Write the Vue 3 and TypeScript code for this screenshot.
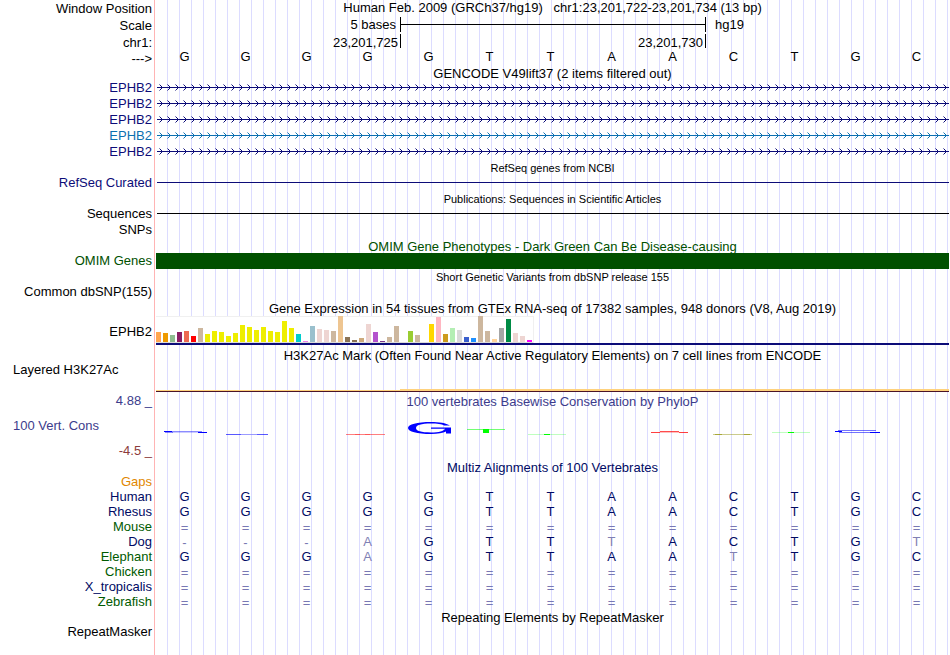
<script setup lang="ts">
interface GeneRow { id: number; tone: string }
interface Species { name: string; tone: string; bases: string; faded: number[] }
interface TissueBar { x: number; height: number; color: string }

const sequence: string[] = 'GGGGGTTAACTGC'.split('')

const genes: GeneRow[] = [
  { id: 1, tone: 'navy' },
  { id: 2, tone: 'navy' },
  { id: 3, tone: 'navy' },
  { id: 4, tone: 'blue' },
  { id: 5, tone: 'navy' },
]

const species: Species[] = [
  { name: 'Human', tone: 'deep', bases: 'GGGGGTTAACTGC', faded: [] },
  { name: 'Rhesus', tone: 'deep', bases: 'GGGGGTTAACTGC', faded: [] },
  { name: 'Mouse', tone: 'green', bases: '=============', faded: [] },
  { name: 'Dog', tone: 'deep', bases: '---AGTTTACTGT', faded: [3, 7, 12] },
  { name: 'Elephant', tone: 'green', bases: 'GGGAGTTAATTGC', faded: [3, 9] },
  { name: 'Chicken', tone: 'green', bases: '=============', faded: [] },
  { name: 'X_tropicalis', tone: 'deep', bases: '=============', faded: [] },
  { name: 'Zebrafish', tone: 'green', bases: '=============', faded: [] },
]

const baseClass = (row: Species, base: string, index: number): string => {
  if (base === '=' || base === '-') return 'gap'
  return row.faded.includes(index) ? 'faded' : 'deep'
}

const tissues: [number, string][] = [
  [10, '#ffa54f'], [9, '#ee9a00'], [7, '#8fbc8f'], [10, '#8b1c62'], [11, '#ee6a50'], [6, '#ff0000'],
  [14, '#cdb79e'], [8, '#eeee00'], [11, '#eeee00'], [10, '#eeee00'], [6, '#eeee00'], [9, '#eeee00'],
  [17, '#eeee00'], [15, '#eeee00'], [12, '#eeee00'], [15, '#eeee00'], [11, '#eeee00'], [10, '#eeee00'],
  [21, '#eeee00'], [14, '#eeee00'], [8, '#00cdcd'], [1, '#ee82ee'], [16, '#9ac0cd'], [13, '#eed5d2'],
  [12, '#eed5d2'], [11, '#cdb79e'], [26, '#eec591'], [5, '#8b7355'], [2, '#8b7355'], [4, '#cdaa7d'],
  [18, '#eed5d2'], [10, '#b452cd'], [1, '#7a378b'], [5, '#cdb79e'], [16, '#cdb79e'], [0, '#cdb79e'],
  [11, '#9acd32'], [7, '#cdb79e'], [0, '#7a67ee'], [18, '#ffd700'], [25, '#ffb6c1'], [8, '#cd9b1d'],
  [14, '#b4eeb4'], [12, '#d9d9d9'], [5, '#3a5fcd'], [4, '#1e90ff'], [26, '#cdb79e'], [11, '#cdb79e'],
  [3, '#ffd39b'], [14, '#a6a6a6'], [23, '#008b45'], [9, '#eed5d2'], [6, '#eed5d2'], [2, '#ff00ff'],
]
const bars: TissueBar[] = tissues.map(([height, color], i) => ({ x: i * 7, height, color }))
</script>

<template>
  <main class="browser">
    <section class="row position">
      <div class="label">Window Position</div>
      <h1 class="title">Human Feb. 2009 (GRCh37/hg19) &nbsp; chr1:23,201,722-23,201,734 (13 bp)</h1>
    </section>
    <section class="row scale">
      <div class="label">Scale</div>
      <div class="ruler">
        <span class="before">5 bases</span>
        <span class="span"></span>
        <span class="after">hg19</span>
      </div>
    </section>
    <section class="row coords">
      <div class="label">chr1:</div>
      <div class="ruler">
        <span class="tick">23,201,725</span>
        <span class="tick">23,201,730</span>
      </div>
    </section>
    <section class="row strand">
      <div class="label">---&gt;</div>
      <div class="bases">
        <span v-for="(base, i) in sequence" :key="i">{{ base }}</span>
      </div>
    </section>

    <h2 class="title track gencode">GENCODE V49lift37 (2 items filtered out)</h2>
    <section v-for="gene in genes" :key="gene.id" class="row gene" :class="gene.tone">
      <div class="label">EPHB2</div>
      <svg class="intron" width="100%" height="16" aria-hidden="true">
        <defs>
          <pattern :id="`arrows-${gene.id}`" x="1" width="8" height="16" patternUnits="userSpaceOnUse">
            <path d="M2 4h1v1h-1zM2 10h1v1h-1z" fill="currentColor" opacity=".5" />
            <path d="M3 5h1v1h-1zM4 6h1v1h-1zM4 8h1v1h-1zM3 9h1v1h-1z" fill="currentColor" />
          </pattern>
        </defs>
        <rect x="1" y="7" width="100%" height="1" fill="currentColor" />
        <rect x="1" width="100%" height="16" :fill="`url(#arrows-${gene.id})`" />
      </svg>
    </section>

    <h2 class="title track small">RefSeq genes from NCBI</h2>
    <section class="row refseq navy">
      <div class="label">RefSeq Curated</div>
      <div class="line"></div>
    </section>

    <h2 class="title track small">Publications: Sequences in Scientific Articles</h2>
    <section class="row sequences">
      <div class="label">Sequences</div>
      <div class="line"></div>
    </section>
    <section class="row snps">
      <div class="label">SNPs</div>
    </section>

    <h2 class="title track omim-title">OMIM Gene Phenotypes - Dark Green Can Be Disease-causing</h2>
    <section class="row omim">
      <div class="label">OMIM Genes</div>
      <div class="block"></div>
    </section>

    <h2 class="title track small dbsnp-title">Short Genetic Variants from dbSNP release 155</h2>
    <section class="row dbsnp">
      <div class="label">Common dbSNP(155)</div>
    </section>

    <h2 class="title track gtex-title">Gene Expression in 54 tissues from GTEx RNA-seq of 17382 samples, 948 donors (V8, Aug 2019)</h2>
    <section class="row gtex">
      <div class="label">EPHB2</div>
      <div class="expression">
        <svg width="378" height="27" shape-rendering="crispEdges" role="img" aria-label="Expression by tissue">
          <rect width="378" height="27" fill="#f0f0f0" />
          <rect y="1" width="377" height="25" fill="#fff" />
          <rect y="26" width="377" height="1" fill="#dcdcdc" />
          <rect v-for="bar in bars" :key="bar.x" :x="bar.x" :y="26 - bar.height" width="5" :height="bar.height" :fill="bar.color" />
        </svg>
      </div>
    </section>

    <h2 class="title track mark-title">H3K27Ac Mark (Often Found Near Active Regulatory Elements) on 7 cell lines from ENCODE</h2>
    <section class="row mark">
      <div class="label left">Layered H3K27Ac</div>
      <div class="signal"><span></span></div>
    </section>

    <section class="row phylop">
      <div class="axis">
        <span class="max">4.88 _</span>
        <span class="name">100 Vert. Cons</span>
        <span class="min">-4.5 _</span>
      </div>
      <div class="conservation">
        <h2 class="title">100 vertebrates Basewise Conservation by PhyloP</h2>
        <svg width="100%" height="26" viewBox="0 0 793 26" preserveAspectRatio="none" fill="none" aria-hidden="true">
          <g stroke="#0000ff">
            <path d="M8 12.5h8M42 13.5h9" />
            <path d="M9 13.5h8M16 12.5h30" opacity=".45" />
            <path d="M16 13.5h26" opacity=".2" />
            <path d="M70 15.5h42" opacity=".65" />
            <path d="M85 15.5h16" stroke="#ffffff" opacity=".4" />
            <path d="M679 12.5h7M714 13.5h10" />
            <path d="M682 11.5h38M683 13.5h34" opacity=".55" />
          </g>
          <path d="M190 15.5h39" stroke="#ff0000" opacity=".5" />
          <path d="M199 15.5h5M209 15.5h5" stroke="#ff0000" opacity=".3" />
          <path d="M495 13.5h9M523 13.5h9" stroke="#ff0000" opacity=".75" />
          <path d="M504 12.5h19" stroke="#ff0000" opacity=".7" />
          <path d="M504 13.5h19" stroke="#ff0000" opacity=".25" />
          <path d="M557 15.5h39" stroke="#8f8f00" opacity=".45" />
          <path d="M559 15.5h7M588 15.5h6" stroke="#8f8f00" opacity=".6" />
          <g stroke="#00ff00">
            <path d="M311 10.5h38" opacity=".55" />
            <path d="M327 12h6" stroke-width="4" />
            <path d="M372 15.5h38M616 13.5h38" opacity=".25" />
            <path d="M388 15.5h6M632 13.5h6" />
          </g>
          <path
            d="M294 6.6C290 4 283 3 275 3C261 3 252 5.500 252 9C252 12.500 261 15 275 15C282 15 287 14 290 12.500V14.500H295V8.500H275V9.700H289C288 12 283 13.400 275 13.400C265 13.400 260 12 260 9C260 6 265 4.500 275 4.500C281 4.500 286 5 288 6.600Z"
            fill="#0000ff"
          />
        </svg>
      </div>
    </section>

    <h2 class="title track deep multiz-title">Multiz Alignments of 100 Vertebrates</h2>
    <section class="row align gaps">
      <div class="label">Gaps</div>
    </section>
    <section v-for="row in species" :key="row.name" class="row align" :class="row.tone">
      <div class="label">{{ row.name }}</div>
      <div class="bases">
        <span v-for="(base, i) in row.bases.split('')" :key="i" :class="baseClass(row, base, i)">{{ base }}</span>
      </div>
    </section>

    <h2 class="title track repeat-title">Repeating Elements by RepeatMasker</h2>
    <section class="row repeat">
      <div class="label">RepeatMasker</div>
    </section>
  </main>
</template>

<style>
body {
  margin: 0;
  background: #fff;
}
</style>

<style scoped>
.browser {
  box-sizing: border-box;
  min-height: 100vh;
  padding-right: 1px;
  color: #000;
  font: 13px/16px "Liberation Sans", Arial, Helvetica, sans-serif;
  background:
    linear-gradient(#ffb4b4, #ffb4b4) 154px 0 / 1px 100% no-repeat,
    linear-gradient(#fff, #fff) 0 0 / 156px 100% no-repeat,
    linear-gradient(to right, #dcdcff 1px, transparent 1px) 11px 0 / 12px 100% repeat-x;
}
.row {
  display: grid;
  grid-template-columns: 152px minmax(0, 1fr);
  column-gap: 4px;
}
.label {
  text-align: right;
  white-space: nowrap;
}
.label.left {
  padding-left: 13px;
  text-align: left;
}
.title {
  margin: 0;
  font-size: 13px;
  font-weight: 400;
  text-align: center;
  white-space: nowrap;
}
.track {
  margin-left: 156px;
}
.small {
  font-size: 11px;
}
.navy { color: #0c0c78; }
.blue { color: #0c70b0; }
.deep { color: #000a64; }
.green { color: #005a00; }
.faded { color: #8080b4; }
.gap {
  padding-top: 1px;
  color: #7878b4;
}

.position {
  height: 17px;
}
.position .title {
  line-height: 15px;
}
.scale {
  height: 17px;
}
.position .label,
.scale .label,
.coords,
.strand .label {
  line-height: 18px;
}
.ruler {
  display: grid;
  grid-template-columns: 4fr 5fr 4fr;
}
.before {
  padding-right: 4px;
  text-align: right;
}
.span {
  height: 15px;
  border: solid #000;
  border-width: 0 1px;
  margin-right: -1px;
  background: linear-gradient(#000, #000) 0 7px / 100% 1px no-repeat;
}
.after {
  padding-left: 10px;
}
.coords {
  height: 16px;
}
.tick {
  height: 14px;
  margin-right: -1px;
  padding-right: 2px;
  border-right: 1px solid #000;
  text-align: right;
}
.bases {
  display: grid;
  grid-template-columns: repeat(13, minmax(0, 1fr));
  margin: 0 2px 0 -2px;
  text-align: center;
}
.strand {
  height: 16px;
}
.strand .bases {
  line-height: 14px;
}
.gencode {
  height: 14px;
}
.intron {
  display: block;
}
.line {
  height: 1px;
  margin: 7px 0 0 1px;
  background: currentColor;
}
.sequences .line {
  margin-top: 6px;
}
.refseq {
  height: 16px;
  margin-top: -1px;
}
.sequences {
  height: 15px;
  line-height: 14px;
}
.snps {
  height: 16px;
}
.omim-title {
  height: 15px;
  line-height: 17px;
  color: #005000;
}
.omim {
  height: 15px;
  color: #005000;
}
.block {
  background: #005000;
}
.dbsnp-title {
  height: 17px;
  line-height: 18px;
}
.dbsnp {
  height: 15px;
  line-height: 14px;
}
.gtex-title {
  height: 16px;
  line-height: 18px;
}
.gtex .label {
  line-height: 32px;
}
.gtex {
  height: 29px;
}
.expression {
  height: 27px;
  border-bottom: 2px solid #0c0c78;
}
.expression svg {
  display: block;
}
.mark-title {
  height: 15px;
  margin-top: 2px;
  line-height: 17px;
}
.mark {
  height: 30px;
}
.mark .left {
  line-height: 15px;
}
.signal {
  display: flex;
  flex-direction: column;
  justify-content: flex-end;
  border-bottom: 1px solid #4b1428;
}
.signal span {
  height: 2px;
  background:
    linear-gradient(#ffd27d, #ffd27d) 0 1px / 100% 1px no-repeat,
    linear-gradient(#ffd27d, #ffd27d) 244px 0 / 100% 1px no-repeat;
}
.phylop {
  height: 68px;
  color: #3c3c8c;
}
.axis {
  display: flex;
  flex-direction: column;
  gap: 9px;
  padding-top: 1px;
  text-align: right;
}
.axis .name {
  padding-left: 13px;
  text-align: left;
}
.axis .min {
  color: #8c3c3c;
}
.conservation .title {
  padding-top: 2px;
}
.conservation svg {
  display: block;
  margin-top: 9px;
}
.multiz-title {
  height: 14px;
  line-height: 16px;
}
.align {
  height: 15px;
  line-height: 15px;
}
.gaps {
  color: #e18700;
}
.repeat-title {
  line-height: 17px;
}
.repeat {
  line-height: 12px;
}
</style>
